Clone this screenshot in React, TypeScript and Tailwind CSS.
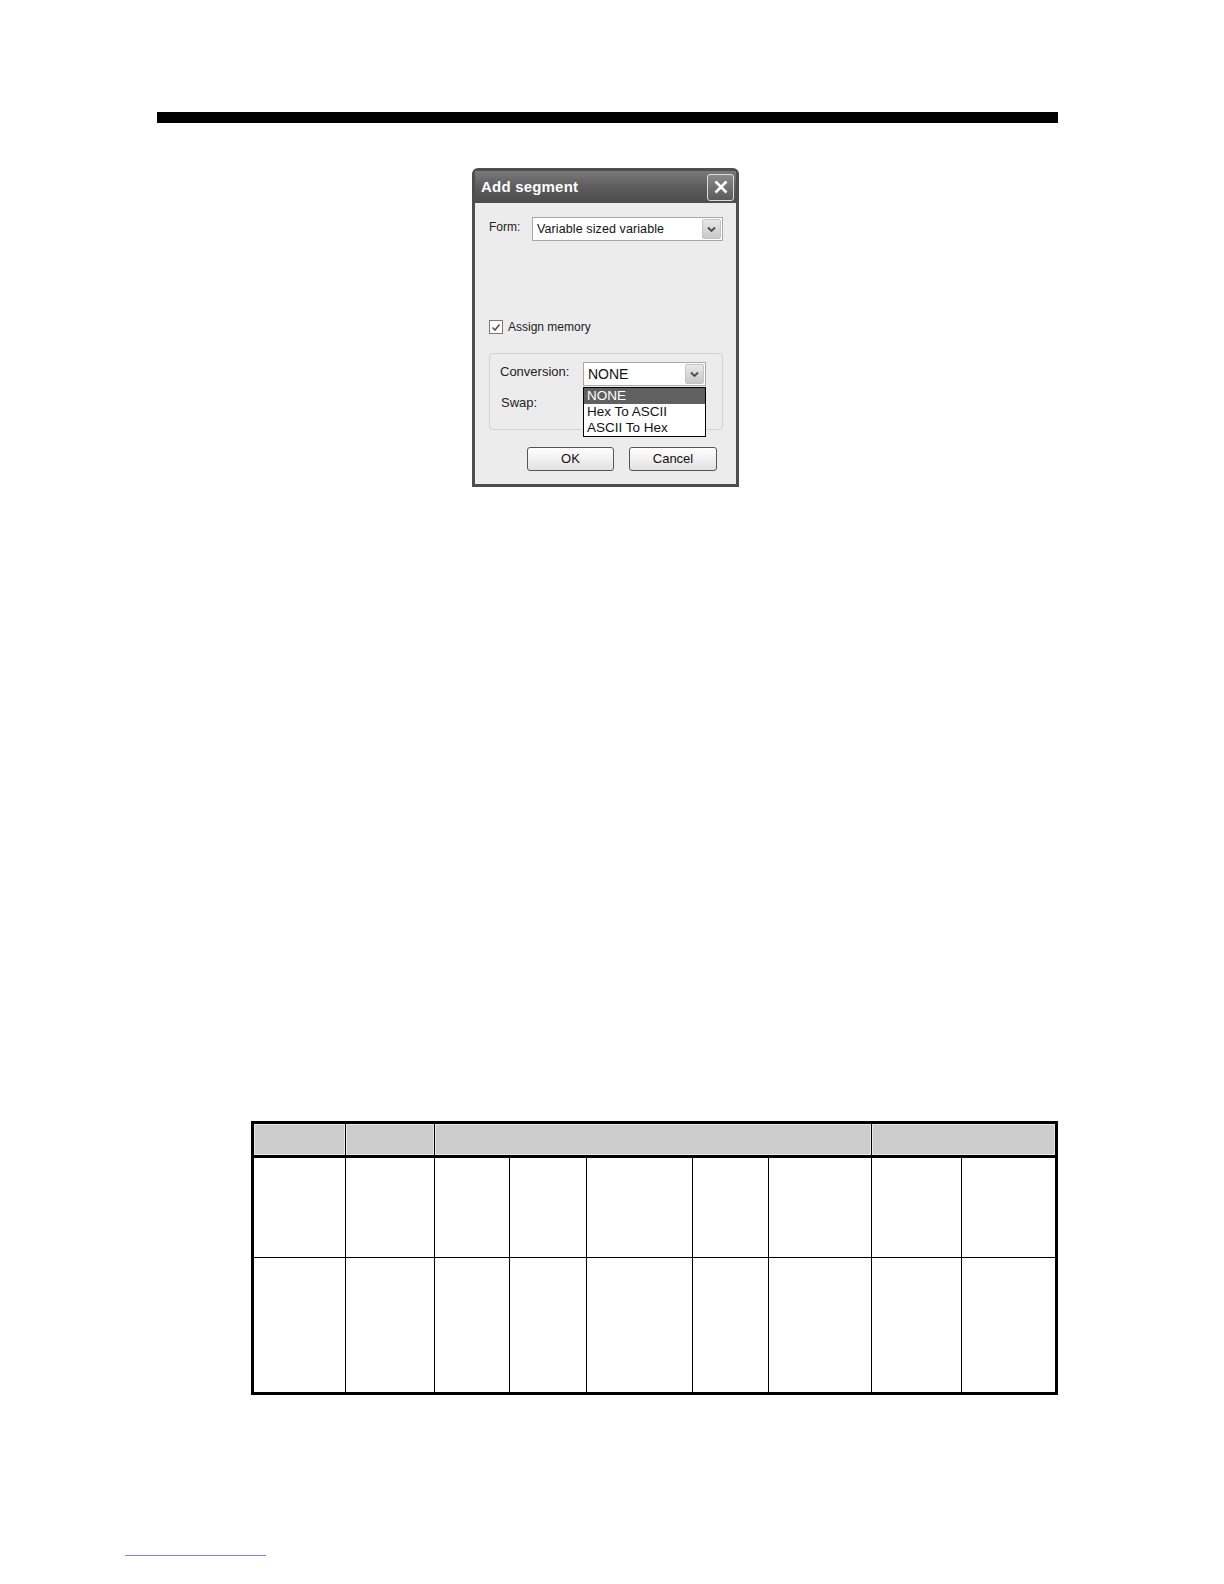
import React from "react";

const F = { fontFamily: '"Liberation Sans", Arial, sans-serif' } as React.CSSProperties;

function Chevron() {
  return (
    <div className="w-[19px] h-[20px] bg-gradient-to-b from-[#e8e8e8] to-[#c8c8c8] border border-[#c4c4c4] rounded-[2px] flex items-center justify-center">
      <svg width="9" height="7" viewBox="0 0 9 7">
        <path d="M1 1.5 L4.5 5 L8 1.5" stroke="#4a4a4a" strokeWidth="1.8" fill="none" />
      </svg>
    </div>
  );
}

export default function App() {
  return (
    <div className="relative w-full h-[1584px] bg-white overflow-hidden" style={F}>
      <div className="pt-[112px] pl-[157px]">
        <div className="w-[901px] h-[11px] bg-black" />
      </div>

      {/* Dialog */}
      <div className="ml-[472px] mt-[45px] w-[267px] h-[319px] border-[3px] border-[#4e4e4e] rounded-t-[6px] bg-[#ececec] flex flex-col">
        <div className="h-[32px] bg-gradient-to-b from-[#7a7a7a] via-[#5c5c5c] to-[#4c4c4c] flex items-center justify-between pl-[6px] pr-[2px]">
          <span className="text-white text-[15px] font-bold tracking-[0.2px]">Add segment</span>
          <div className="w-[27px] h-[27px] border border-[#dcdcdc] rounded-[3px] bg-gradient-to-b from-[#8a8a8a] to-[#5a5a5a] flex items-center justify-center">
            <svg width="16" height="16" viewBox="0 0 16 16">
              <path d="M2.5 2.5 L13.5 13.5 M13.5 2.5 L2.5 13.5" stroke="#ffffff" strokeWidth="2.6" />
            </svg>
          </div>
        </div>
        <div className="flex-1 relative">
          {/* Form row */}
          <div className="flex pt-[14px] pl-[14px]">
            <span className="text-[12px] text-[#222] w-[43px] pt-[1px]">Form:</span>
            <div className="w-[191px] h-[24px] bg-white border border-[#a8a8a8] flex items-center justify-between pl-[4px] pr-[1px]">
              <span className="text-[12.5px] text-[#111] tracking-[0.1px]">Variable sized variable</span>
              <Chevron />
            </div>
          </div>

          {/* Checkbox */}
          <div className="flex items-center pl-[14px] mt-[77px]">
            <div className="w-[14px] h-[14px] border border-[#7a7a7a] bg-white flex items-center justify-center">
              <svg width="10" height="9" viewBox="0 0 10 9">
                <path d="M1.5 4.5 L4 7 L8.5 1.5" stroke="#555" strokeWidth="1.6" fill="none" />
              </svg>
            </div>
            <span className="text-[12px] text-[#222] ml-[5px]">Assign memory</span>
          </div>

          {/* Group box */}
          <div className="ml-[14px] mt-[17px] w-[234px] h-[77px] border border-[#d2d2d2] rounded-[4px] relative">
            <div className="flex pt-[8px] pl-[10px]">
              <span className="text-[13px] text-[#222] w-[83px]">Conversion:</span>
              <div className="w-[123px] h-[24px] bg-white border border-[#a8a8a8] flex items-center justify-between pl-[4px] pr-[1px]">
                <span className="text-[14px] text-[#111]">NONE</span>
                <Chevron />
              </div>
            </div>
            <div className="pl-[11px] mt-[7px] text-[13px] text-[#222]">Swap:</div>
            <div className="absolute left-[93px] top-[33px] w-[123px] h-[50px] bg-white border border-black flex flex-col text-[13.5px] leading-[15.5px] text-[#111]">
              <div className="bg-[#606060] text-white pl-[3px] h-[16px]">NONE</div>
              <div className="pl-[3px]">Hex To ASCII</div>
              <div className="pl-[3px]">ASCII To Hex</div>
            </div>
          </div>

          {/* Buttons */}
          <div className="flex mt-[17px] pl-[52px] gap-[15px]">
            <div className="w-[87px] h-[24px] border border-[#555] rounded-[3px] bg-gradient-to-b from-[#ffffff] to-[#e2e2e2] flex items-center justify-center text-[13px] text-[#111]">OK</div>
            <div className="w-[88px] h-[24px] border border-[#555] rounded-[3px] bg-gradient-to-b from-[#ffffff] to-[#e2e2e2] flex items-center justify-center text-[13px] text-[#111]">Cancel</div>
          </div>
        </div>
      </div>

      {/* Table */}
      <div className="ml-[251px] mt-[634px] w-[807px] border-[3px] border-black">
        <div className="flex h-[34px] border-b-[3px] border-black">
          <div className="w-[92px] bg-[#cccccc] border-r border-black shadow-[inset_1px_1px_0_#e8e8e8,inset_-1px_-1px_0_#e8e8e8]" />
          <div className="w-[89px] bg-[#cccccc] border-r border-black shadow-[inset_1px_1px_0_#e8e8e8,inset_-1px_-1px_0_#e8e8e8]" />
          <div className="w-[437px] bg-[#cccccc] border-r border-black shadow-[inset_1px_1px_0_#e8e8e8,inset_-1px_-1px_0_#e8e8e8]" />
          <div className="flex-1 bg-[#cccccc] shadow-[inset_1px_1px_0_#e8e8e8,inset_-1px_-1px_0_#e8e8e8]" />
        </div>
        {[0, 1].map((r) => (
          <div key={r} className={r === 0 ? "flex h-[100px] border-b border-black" : "flex h-[134px]"}>
            <div className="w-[92px] border-r border-black" />
            <div className="w-[89px] border-r border-black" />
            <div className="w-[75px] border-r border-black" />
            <div className="w-[77px] border-r border-black" />
            <div className="w-[106px] border-r border-black" />
            <div className="w-[76px] border-r border-black" />
            <div className="w-[103px] border-r border-black" />
            <div className="w-[90px] border-r border-black" />
            <div className="flex-1" />
          </div>
        ))}
      </div>

      <div className="ml-[125px] mt-[160px] w-[141px] h-[1px] bg-[#8080ff]" />
    </div>
  );
}
